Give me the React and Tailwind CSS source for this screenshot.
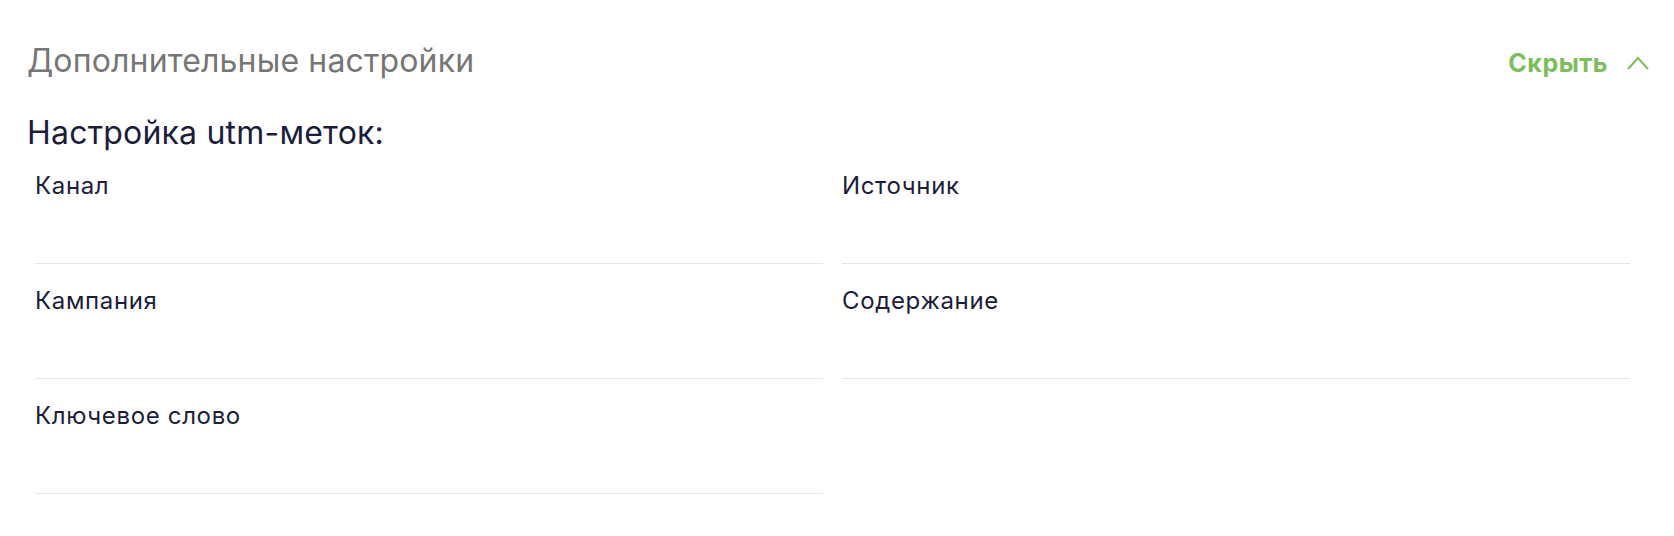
import React from 'react';

const FIELDS = [
  { id: 'medium', label: 'Канал' },
  { id: 'source', label: 'Источник' },
  { id: 'campaign', label: 'Кампания' },
  { id: 'content', label: 'Содержание' },
  { id: 'term', label: 'Ключевое слово' },
];

function UtmField({ label }) {
  return (
    <div className="flex flex-col">
      <label className="text-[24px] leading-[32px] tracking-[0.65px] text-[#1c1d3b] translate-y-[1px]">{label}</label>
      <input
        type="text"
        className="h-[63px] w-full border-b border-[#e6e6e6] bg-transparent text-[24px] text-[#1c1d3b] outline-none"
      />
    </div>
  );
}

export default function App() {
  return (
    <div
      className="min-h-screen w-full bg-white px-[27px] pt-[41px] pb-[40px]"
      style={{ fontFamily: 'Inter, "Noto Sans", sans-serif' }}
    >
      {/* Header: title + collapse toggle */}
      <div className="flex items-baseline justify-between">
        <h2 className="text-[32px] leading-[40px] tracking-[0.15px] text-[#767676]">Дополнительные настройки</h2>
        <button className="-mr-[2px] flex items-center gap-[19px] text-[25px] leading-[32px] tracking-[0.5px] font-bold text-[#7dbd5b]">
          Скрыть
          <svg width="22" height="14" viewBox="0 0 22 14" fill="none" stroke="#7dbd5b" strokeWidth="2">
            <polyline points="1,13 11,2 21,13" />
          </svg>
        </button>
      </div>

      <h3 className="mt-[32px] text-[32px] leading-[40px] tracking-[0.2px] text-[#1c1d3b]">Настройка utm-меток:</h3>

      {/* utm fields */}
      <div className="mt-[16px] grid grid-cols-2 gap-x-[19px] gap-y-[20px] pl-[8px] pr-[17px]">
        {FIELDS.map((f) => (
          <UtmField key={f.id} label={f.label} />
        ))}
      </div>
    </div>
  );
}
